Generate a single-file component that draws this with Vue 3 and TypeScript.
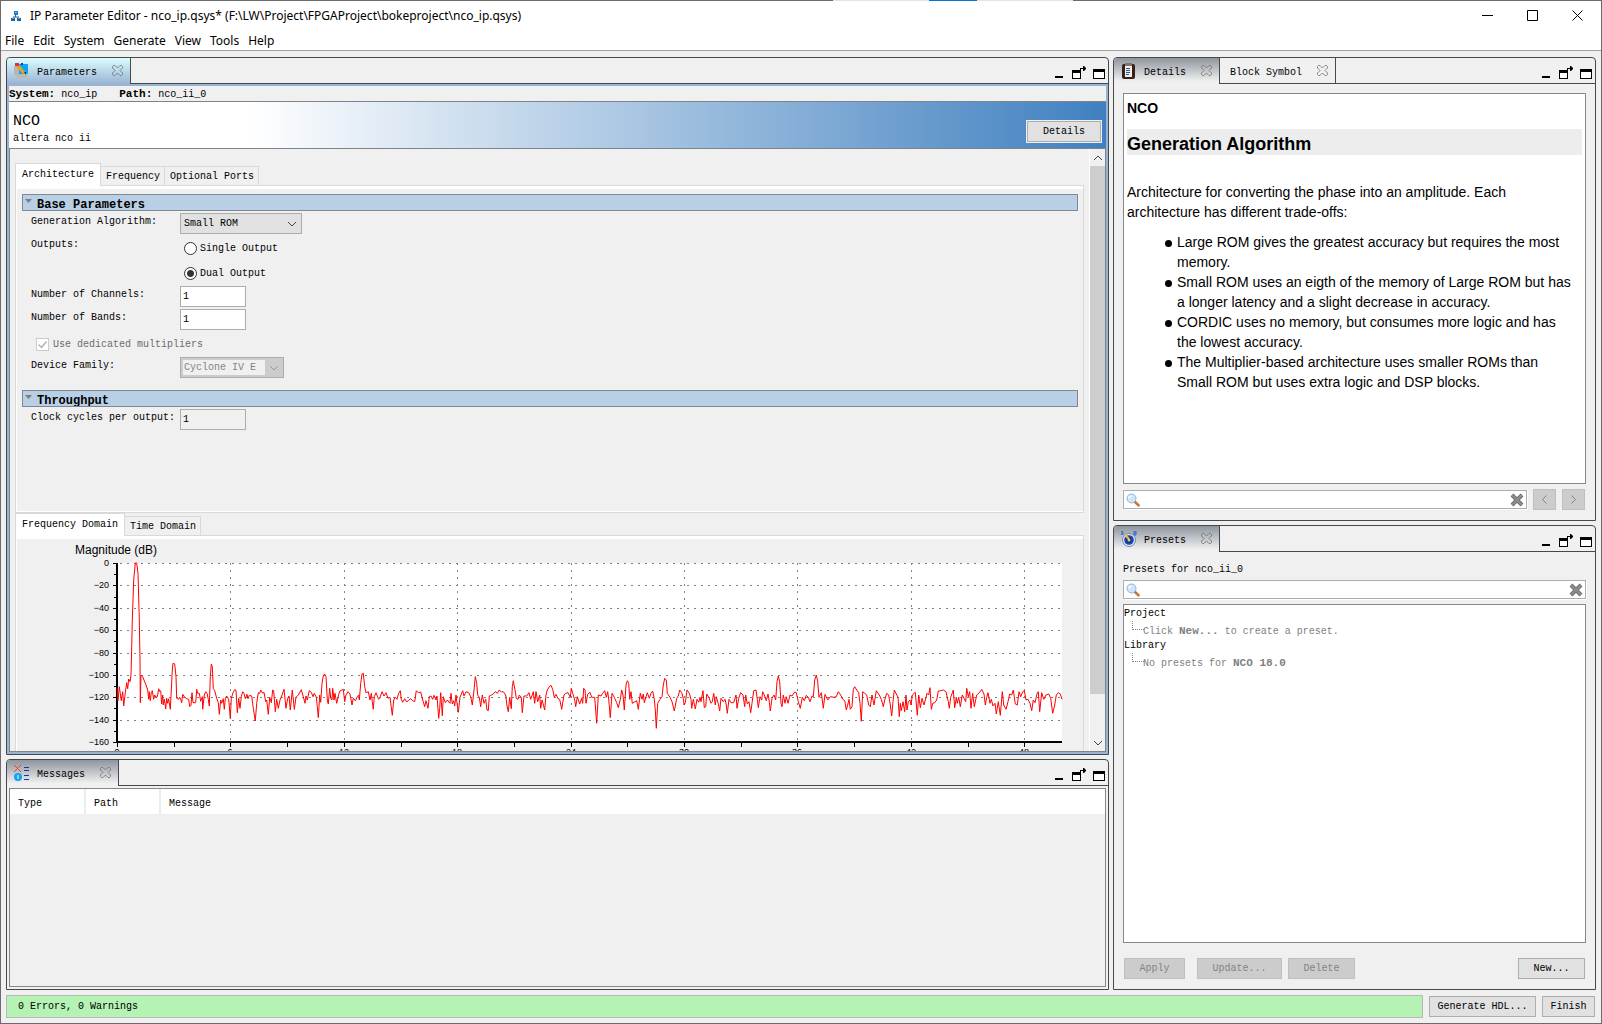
<script setup lang="ts">
import { ref } from 'vue'

const menus = ['File', 'Edit', 'System', 'Generate', 'View', 'Tools', 'Help']
const algorithms = ['Small ROM', 'Large ROM', 'CORDIC', 'Multiplier-based']
const algorithm = ref('Small ROM')
const outputs = ref('dual')
const channels = ref('1')
const bands = ref('1')
const cycles = ref('1')
const family = ref('Cyclone IV E')
const dedicated = ref(true)
const detailSearch = ref('')
const presetSearch = ref('')

const tradeOffs = [
  'Large ROM gives the greatest accuracy but requires the most memory.',
  'Small ROM uses an eigth of the memory of Large ROM but has a longer latency and a slight decrease in accuracy.',
  'CORDIC uses no memory, but consumes more logic and has the lowest accuracy.',
  'The Multiplier-based architecture uses smaller ROMs than Small ROM but uses extra logic and DSP blocks.',
]

// Spectrum samples as "bin,level" pairs; three units make one drawing unit.
const lowBand = `21,143 24,182 28,140 34,182 38,155 41,198 46,158 50,128 53,146 56,117 60,125 63,105 65,20 67,-60 71,-180 76,-231 80,-231 84,-200 88,-60 90,60 91,188 93,105 98,110 108,135 113,150 116,178 118,155 121,182 124,158 127,152 131,178 134,165 138,172 142,170 146,146 149,155 152,152 155,192 158,165 160,195 163,178 165,190 167,207 170,175 173,190 176,176 178,188 181,208 184,150 187,90 189,70 194,72 198,110 200,175 206,178 209,172 212,178 215,188 218,163 224,172 230,176 236,178 239,200 243,196 246,158 249,188 257,188 260,148 263,160 268,160 272,184 277,170 278,208 283,165 287,155 291,160 295,178 298,198 301,110 304,72 307,80 310,145 314,152 320,175 325,188 328,223 332,180 335,190 340,176 343,208 346,176 350,168 356,178 361,235 364,175 369,158 374,149 378,151 382,218 386,175 390,205 394,170 398,155 402,160 406,176 411,163 414,176 418,166 425,168 430,205 436,243 440,190 445,158 449,160 452,150 458,160 462,157 467,185 470,180 475,223 479,172 484,188 488,150 491,152 496,215 500,178 505,205 510,180 516,165 522,148 528,205 533,175 537,168 541,210 547,150 553,208 558,172 565,165 574,149 580,170 585,190 588,168 592,180 598,152 604,157 609,170 613,160 619,172 622,200 625,233 629,165 632,187 636,130 640,108 644,102 648,110 652,180 655,192 659,145 662,175 666,180 668,145 672,180 675,160 680,190 686,163 690,153 700,148 704,185 708,165 714,155 720,162 726,195 730,175 736,182 742,170 746,165 748,180 752,130 756,102 760,100 764,140 768,158 775,155 780,180 784,160 787,185 790,208 793,170 798,158 803,172 806,178 811,170 816,155 822,168 828,158 834,175 840,172 847,226 851,180 856,172 861,178 866,160 871,152 874,178 878,187 884,176 890,186 896,180 902,176 908,182 914,185 919,152 925,158 932,156 938,180 944,200 948,182 954,205 958,170 963,168 968,178 972,166 978,180 981,168 986,235 989,205 992,158 997,227 1000,170 1006,188 1012,180 1020,190 1023,160 1027,192 1031,182 1034,198 1038,165 1041,190 1045,217 1050,172 1058,152 1062,168 1068,155 1076,158 1082,170 1087,195 1092,150 1096,110 1100,130 1103,165 1108,172 1112,200 1117,165 1122,190 1127,178 1131,210 1135,212 1138,168 1144,165 1150,162 1156,155 1162,160 1168,150 1174,156 1180,155 1187,165 1191,198 1195,215 1199,172 1204,206 1207,140 1210,122 1215,150 1219,175 1224,178 1228,165 1234,172 1237,218 1242,168 1250,168 1257,158 1262,178 1270,155 1274,190 1278,155 1283,185 1289,165 1292,205 1296,180 1299,190 1304,210 1308,165 1312,150 1318,140 1323,136 1328,148 1333,172 1338,163 1344,176 1349,178 1355,208 1362,165 1367,160 1374,158 1381,172 1384,145 1388,160 1394,180 1397,200 1402,170 1409,192 1415,175 1418,190 1421,145 1425,150`
const highBand = `0,190 5,163 12,157 17,172 26,172 32,250 37,165 45,168 50,160 56,152 61,172 65,155 68,178 73,233 78,160 85,172 92,188 97,203 103,178 107,150 111,165 115,210 120,135 124,122 128,130 131,178 135,155 139,190 147,185 152,182 157,208 163,160 168,178 172,162 175,188 180,170 184,158 190,175 195,160 200,153 205,178 208,210 211,265 215,190 222,178 228,170 232,135 236,115 241,120 244,160 252,172 258,185 265,213 272,175 277,168 281,150 287,158 292,175 294,195 298,188 303,150 310,160 315,178 317,205 322,178 328,207 333,178 338,187 342,172 345,185 348,168 351,152 355,203 359,200 362,162 370,175 375,190 379,185 383,160 388,195 391,170 396,188 401,213 405,175 412,185 417,178 421,195 424,220 429,178 435,188 443,188 450,165 453,205 458,175 464,158 471,165 476,200 479,165 484,192 489,185 494,218 498,190 503,152 510,150 514,178 517,203 522,170 527,180 530,155 535,165 541,182 546,162 550,185 553,213 558,175 564,165 569,180 573,125 577,108 581,125 585,190 588,200 592,165 597,190 601,170 606,190 612,165 618,168 626,156 631,158 637,185 643,205 649,172 655,182 661,166 667,172 672,185 678,168 682,170 686,120 691,105 695,125 699,172 706,158 712,205 717,163 725,180 733,170 744,172 751,170 757,155 764,165 770,178 776,182 781,210 785,195 789,178 793,208 798,200 802,148 806,140 812,150 818,158 822,190 826,244 830,155 836,160 842,165 848,195 853,200 858,165 864,195 871,152 880,165 886,178 892,200 896,180 902,160 908,165 913,195 917,228 921,185 925,150 931,162 936,172 940,230 943,190 946,212 951,185 956,215 960,165 963,210 967,185 972,180 975,195 979,165 988,157 994,226 998,165 1003,203 1008,175 1014,195 1018,180 1023,160 1028,165 1032,143 1036,208 1040,190 1046,188 1052,180 1057,153 1064,152 1072,150 1080,155 1087,185 1090,205 1094,172 1102,150 1106,203 1111,172 1114,190 1118,172 1123,200 1129,165 1134,175 1139,185 1142,145 1147,170 1151,155 1155,205 1160,160 1165,200 1172,165 1180,158 1187,148 1194,162 1198,195 1202,172 1206,158 1212,190 1216,178 1221,198 1227,190 1231,222 1237,185 1243,226 1249,155 1253,195 1260,208 1266,185 1271,162 1277,165 1282,150 1288,192 1294,195 1299,155 1304,170 1310,155 1315,152 1320,180 1326,178 1332,190 1337,212 1342,180 1347,188 1354,158 1357,155 1361,215 1367,158 1373,178 1380,165 1388,162 1394,175 1400,220 1406,195 1411,165 1417,158 1423,162 1428,178`

const AXIS_X = 101
const AXIS_TOP = 24
const AXIS_BOTTOM = 203
const PLOT_RIGHT = 1046

function toPoints(band: string, shift: number): string {
  return band
    .split(' ')
    .map((pair) => {
      const [x, y] = pair.split(',').map(Number)
      return `${((x + shift - 21) / 3 + AXIS_X).toFixed(1)},${(y / 3 + 101).toFixed(1)}`
    })
    .join(' ')
}
const spectrum = toPoints(lowBand, 0) + ' ' + toPoints(highBand, 1428)

const step = (AXIS_BOTTOM - AXIS_TOP) / 16
const yTicks = Array.from({ length: 17 }, (_, i) => ({
  y: Math.round(AXIS_TOP + i * step),
  major: i % 2 === 0,
  label: i === 0 ? '0' : `−${i * 10}`,
}))
const xTicks = Array.from({ length: 17 }, (_, i) => ({
  x: Math.round(AXIS_X + i * 56.7),
  major: i % 2 === 0,
  label: String(i * 3),
}))
</script>

<template>
  <div class="window">
    <svg class="defs" aria-hidden="true">
      <symbol id="i-close" viewBox="0 0 11 11">
        <path d="M1.5 .5h1.500L5.500 3 8 .5h1.500l1 1V3L8 5.500 10.500 8v1.500l-1 1H8L5.500 8 3 10.500H1.500l-1-1V8L3 5.500.5 3V1.500z" fill="none" stroke="#6e6e6e" stroke-width=".8" />
      </symbol>
      <symbol id="i-min" viewBox="0 0 14 14"><path d="M3 10h8v2H3z" /></symbol>
      <symbol id="i-float" viewBox="0 0 14 14">
        <path d="M0 4h9v9H0z" />
        <path d="M1 7h7v5H1z" fill="#fff" />
        <path d="M8 5V2h3V0h1l2 2v1l-2 2h-1V3H9v2z" />
      </symbol>
      <symbol id="i-max" viewBox="0 0 14 14">
        <path d="M1 3h12v10H1z" /><path d="M2 6h10v6H2z" fill="#fff" />
      </symbol>
      <symbol id="i-search" viewBox="0 0 14 14">
        <path d="M8.500 8.500l4 3.800" stroke="#c07a3c" stroke-width="2.600" stroke-linecap="round" />
        <circle cx="5.500" cy="5.500" r="4.500" fill="#cfe6fa" stroke="#8fb3dc" />
        <path d="M3 5.500a2.500 2.500 0 0 1 2.500-2.500" fill="none" stroke="#fff" stroke-width="1.400" />
      </symbol>
      <symbol id="i-clear" viewBox="0 0 14 14">
        <path d="M2 2l10 10M12 2L2 12" stroke="#6f6f6f" stroke-width="4" />
        <path d="M2 2l10 10M12 2L2 12" stroke="#8e8e8e" stroke-width="2" />
      </symbol>
      <symbol id="i-down" viewBox="0 0 10 6"><path d="M1 1l4 4 4-4" fill="none" stroke="currentColor" /></symbol>
    </svg>

    <div class="behind"><i class="pale"></i><i class="blue"></i><i class="pale"></i></div>

    <header class="titlebar">
      <svg class="app-icon" viewBox="0 0 10 12">
        <path d="M3 1h4v4H3z" fill="#1e7ad0" /><path d="M4 2h2v1H4z" fill="#6db4f0" />
        <path d="M4.500 5v2M2 7.500V7h6v.5" stroke="#555" fill="none" />
        <path d="M0 8h4v3H0zM6 8h4v3H6z" fill="#0c64b8" /><path d="M1 8h2v1H1zM7 8h2v1H7z" fill="#3aa0f0" />
      </svg>
      <h1>IP Parameter Editor - nco_ip.qsys* (F:\LW\Project\FPGAProject\bokeproject\nco_ip.qsys)</h1>
      <div class="sysbuttons">
        <button aria-label="Minimize window"><svg viewBox="0 0 11 11"><path d="M0 5h11v1H0z" /></svg></button>
        <button aria-label="Maximize window"><svg viewBox="0 0 11 11"><path d="M.5.5h10v10H.5z" fill="none" stroke="#000" /></svg></button>
        <button aria-label="Close window"><svg viewBox="0 0 11 11"><path d="M.5.5l10 10M10.500.5l-10 10" fill="none" stroke="#000" /></svg></button>
      </div>
    </header>

    <nav class="menubar"><button v-for="m in menus" :key="m">{{ m }}</button></nav>

    <main class="workspace">
      <div class="left">
        <section class="panel active parameters">
          <div class="panel-head">
            <div class="tab on">
              <svg class="tab-icon" viewBox="0 0 16 16">
                <path d="M0 3h9v9H0z" fill="#b9b4b0" /><path d="M5 1h9v10H5z" fill="#0aa6f5" />
                <path d="M3 2l8 9" stroke="#f0a020" stroke-width="3" /><path d="M1 0h4v3H1z" fill="#ee2a2a" />
                <path d="M10 9l2 3 0-3z" fill="#06325c" /><path d="M7 0h2v2H7z" fill="#1238a8" /><path d="M2 12h12v3H2z" fill="#bdb9b6" />
              </svg>
              <span>Parameters</span>
              <button class="x" aria-label="Close Parameters"><svg><use href="#i-close" /></svg></button>
            </div>
            <div class="tools">
              <button aria-label="Minimize"><svg><use href="#i-min" /></svg></button>
              <button aria-label="Float"><svg><use href="#i-float" /></svg></button>
              <button aria-label="Maximize"><svg><use href="#i-max" /></svg></button>
            </div>
          </div>
          <div class="bevel">
            <p class="crumb"><span><b>System:</b> nco_ip</span><span><b>Path:</b> nco_ii_0</span></p>
            <div class="banner">
              <div><h2>NCO</h2><p>altera nco ii</p></div>
              <button class="btn ringed">Details</button>
            </div>
            <div class="scroller">
              <div class="content">
                <div class="tabs">
                  <button class="on">Architecture</button><button>Frequency</button><button>Optional Ports</button>
                </div>
                <div class="pane arch">
                  <h3><svg viewBox="0 0 7 4"><path d="M0 0h7L3.500 4z" /></svg>Base Parameters</h3>
                  <div class="row">
                    <label for="alg">Generation Algorithm:</label>
                    <div class="combo wide">
                      <select id="alg" v-model="algorithm"><option v-for="a in algorithms" :key="a">{{ a }}</option></select>
                      <svg><use href="#i-down" /></svg>
                    </div>
                  </div>
                  <div class="row" role="radiogroup" aria-labelledby="outs">
                    <span id="outs" class="label">Outputs:</span>
                    <div class="radios">
                      <label><input v-model="outputs" type="radio" name="outputs" value="single" />Single Output</label>
                      <label><input v-model="outputs" type="radio" name="outputs" value="dual" />Dual Output</label>
                    </div>
                  </div>
                  <div class="row"><label for="ch">Number of Channels:</label><input id="ch" v-model="channels" class="field" /></div>
                  <div class="row"><label for="bd">Number of Bands:</label><input id="bd" v-model="bands" class="field" /></div>
                  <div class="check">
                    <input id="ded" v-model="dedicated" type="checkbox" disabled />
                    <svg viewBox="0 0 13 13"><path d="M2.500 6.500l3 3 5-6" fill="none" stroke="#b0b0b0" stroke-width="1.400" /></svg>
                    <label for="ded">Use dedicated multipliers</label>
                  </div>
                  <div class="row family">
                    <label for="fam">Device Family:</label>
                    <div class="combo off">
                      <select id="fam" v-model="family" disabled><option>Cyclone IV E</option></select>
                      <svg><use href="#i-down" /></svg>
                    </div>
                  </div>
                  <h3><svg viewBox="0 0 7 4"><path d="M0 0h7L3.500 4z" /></svg>Throughput</h3>
                  <div class="row"><label for="cyc">Clock cycles per output:</label><input id="cyc" v-model="cycles" class="field locked" readonly /></div>
                </div>
                <div class="tabs lower"><button class="on">Frequency Domain</button><button>Time Domain</button></div>
                <div class="pane chart">
                  <svg viewBox="0 0 1066 226" preserveAspectRatio="xMinYMin meet" role="img" aria-label="Magnitude in decibels by frequency">
                    <rect :x="AXIS_X" :y="AXIS_TOP" :width="PLOT_RIGHT - AXIS_X" :height="AXIS_BOTTOM - AXIS_TOP" fill="#fff" />
                    <text x="59" y="15" class="axis-title">Magnitude (dB)</text>
                    <g class="grid">
                      <template v-for="t in yTicks" :key="t.y">
                        <line v-if="t.major && t.y < AXIS_BOTTOM" :x1="AXIS_X + 3" :x2="PLOT_RIGHT" :y1="t.y" :y2="t.y" />
                      </template>
                      <template v-for="t in xTicks" :key="t.x">
                        <line v-if="t.major && t.x > AXIS_X" :x1="t.x" :x2="t.x" :y1="AXIS_TOP" :y2="AXIS_BOTTOM" />
                      </template>
                    </g>
                    <g class="ticks">
                      <template v-for="t in yTicks" :key="t.y">
                        <line :x1="t.major ? AXIS_X - 4 : AXIS_X - 3" :x2="AXIS_X" :y1="t.y" :y2="t.y" />
                        <text v-if="t.major" :x="AXIS_X - 8" :y="t.y + 3" text-anchor="end">{{ t.label }}</text>
                      </template>
                      <template v-for="t in xTicks" :key="t.x">
                        <line :x1="t.x" :x2="t.x" :y1="AXIS_BOTTOM" :y2="AXIS_BOTTOM + 5" />
                        <text v-if="t.major" :x="t.x" :y="AXIS_BOTTOM + 13" text-anchor="middle">{{ t.label }}</text>
                      </template>
                    </g>
                    <path :d="`M${AXIS_X} ${AXIS_TOP}V${AXIS_BOTTOM}H${PLOT_RIGHT}`" fill="none" stroke="#000" stroke-width="2" />
                    <polyline :points="spectrum" fill="none" stroke="#f00" />
                  </svg>
                </div>
              </div>
              <div class="scrollbar">
                <button aria-label="Scroll up"><svg class="flip"><use href="#i-down" /></svg></button>
                <div class="track"><div class="thumb"></div></div>
                <button aria-label="Scroll down"><svg><use href="#i-down" /></svg></button>
              </div>
            </div>
          </div>
        </section>

        <section class="panel messages">
          <div class="panel-head">
            <div class="tab on">
              <svg class="tab-icon" viewBox="0 0 16 16">
                <path d="M0 0l7 7M7 0L0 7" stroke="#e8402c" /><circle cx="4" cy="12" r="4" fill="#12a4f2" />
                <path d="M3.500 10h1v4h-1z" fill="#fff" /><path d="M10 2h5v1h-5zM10 5h5v1h-5zM10 10h5v1h-5zM10 14h5v1h-5z" fill="#0b3f9e" />
              </svg>
              <span>Messages</span>
              <button class="x" aria-label="Close Messages"><svg><use href="#i-close" /></svg></button>
            </div>
            <div class="tools">
              <button aria-label="Minimize"><svg><use href="#i-min" /></svg></button>
              <button aria-label="Float"><svg><use href="#i-float" /></svg></button>
              <button aria-label="Maximize"><svg><use href="#i-max" /></svg></button>
            </div>
          </div>
          <div class="table-box">
            <table>
              <thead><tr><th class="c1">Type</th><th class="c2">Path</th><th>Message</th></tr></thead>
              <tbody></tbody>
            </table>
          </div>
        </section>
      </div>

      <div class="right">
        <section class="panel details">
          <div class="panel-head">
            <div class="tab on">
              <svg class="tab-icon" viewBox="0 0 16 16">
                <rect x="1" y="1" width="13" height="15" rx="2" fill="#3a1f1c" /><path d="M4 0h7v3H4z" fill="#777" />
                <path d="M4 3h7v11H4z" fill="#f6efdc" /><path d="M5 5h4v1H5zM5 7h4v1H5zM5 9h4v1H5zM5 11h3v1H5z" fill="#1f55b5" />
              </svg>
              <span>Details</span>
              <button class="x" aria-label="Close Details"><svg><use href="#i-close" /></svg></button>
            </div>
            <div class="tab second">
              <span>Block Symbol</span>
              <button class="x" aria-label="Close Block Symbol"><svg><use href="#i-close" /></svg></button>
            </div>
            <div class="tools">
              <button aria-label="Minimize"><svg><use href="#i-min" /></svg></button>
              <button aria-label="Float"><svg><use href="#i-float" /></svg></button>
              <button aria-label="Maximize"><svg><use href="#i-max" /></svg></button>
            </div>
          </div>
          <div class="body">
            <article class="doc">
              <h4>NCO</h4>
              <h2>Generation Algorithm</h2>
              <p>Architecture for converting the phase into an amplitude. Each architecture has different trade-offs:</p>
              <ul><li v-for="t in tradeOffs" :key="t">{{ t }}</li></ul>
            </article>
            <div class="find">
              <div class="search">
                <svg><use href="#i-search" /></svg>
                <input v-model="detailSearch" aria-label="Search details" />
                <button aria-label="Clear search"><svg><use href="#i-clear" /></svg></button>
              </div>
              <button class="btn nav" disabled aria-label="Previous"><svg viewBox="0 0 5 9"><path d="M4.500.5l-4 4 4 4" /></svg></button>
              <button class="btn nav last" disabled aria-label="Next"><svg viewBox="0 0 5 9"><path d="M.5.5l4 4-4 4" /></svg></button>
            </div>
          </div>
        </section>

        <section class="panel presets">
          <div class="panel-head">
            <div class="tab on">
              <svg class="tab-icon" viewBox="0 0 16 16">
                <path d="M0 4V1l1-1 1 1v3M0 3h2M13 0v4h2V0zM13 2h2" fill="none" stroke="#3a62c8" />
                <circle cx="8" cy="9" r="6.500" fill="#dfe6f2" stroke="#6f8ac4" /><circle cx="8" cy="9" r="4.800" fill="#1c46b4" />
                <circle cx="8" cy="9" r="2.500" fill="#0b2a80" /><path d="M4 4l4 4" stroke="#f5c531" stroke-width="2" /><circle cx="8" cy="9" r="1.500" fill="#f5d14a" />
              </svg>
              <span>Presets</span>
              <button class="x" aria-label="Close Presets"><svg><use href="#i-close" /></svg></button>
            </div>
            <div class="tools">
              <button aria-label="Minimize"><svg><use href="#i-min" /></svg></button>
              <button aria-label="Float"><svg><use href="#i-float" /></svg></button>
              <button aria-label="Maximize"><svg><use href="#i-max" /></svg></button>
            </div>
          </div>
          <div class="body">
            <label for="ps" class="caption">Presets for nco_ii_0</label>
            <div class="search">
              <svg><use href="#i-search" /></svg>
              <input id="ps" v-model="presetSearch" />
              <button aria-label="Clear search"><svg><use href="#i-clear" /></svg></button>
            </div>
            <ul class="tree">
              <li>Project<p>Click <b>New...</b> to create a preset.</p></li>
              <li>Library<p>No presets for <b>NCO 18.0</b></p></li>
            </ul>
            <div class="actions">
              <button class="btn b1" disabled>Apply</button>
              <button class="btn b2" disabled>Update...</button>
              <button class="btn b3" disabled>Delete</button>
              <button class="btn b3 new">New...</button>
            </div>
          </div>
        </section>
      </div>
    </main>

    <footer class="statusbar">
      <output>0 Errors, 0 Warnings</output>
      <button class="btn gen">Generate HDL...</button>
      <button class="btn fin">Finish</button>
    </footer>
  </div>
</template>

<style>
body { margin: 0; background: #f0f0f0; }
</style>

<style scoped>
* { box-sizing: border-box; }
h1, h2, h3, h4, p, ul { margin: 0; padding: 0; font-weight: 400; }
ul { list-style: none; }
button { margin: 0; padding: 0; border: 0; background: none; color: inherit; font: inherit; }
input, select { margin: 0; font: inherit; color: inherit; border-radius: 0; }
svg { display: block; flex: none; }
.defs { display: none; }

.window {
  position: relative;
  display: flex;
  flex-direction: column;
  height: 100vh;
  border: 1px solid #6b6b6b;
  background: #f0f0f0;
  color: #000;
  font: 10px/14px 'Liberation Mono', monospace;
}
.behind { position: absolute; top: -1px; left: 52%; display: flex; width: 15%; height: 1px; }
.behind i { flex: 2; background: #e4e4e4; }
.behind .blue { flex: 1; background: #0078d7; }

.titlebar { display: flex; align-items: center; height: 29px; padding-left: 10px; background: #fff; font: 12px/16px 'Noto Sans', sans-serif; }
.app-icon { width: 10px; height: 12px; margin-right: 9px; }
.titlebar h1 { flex: 1; font-size: 12px; }
.sysbuttons { display: flex; padding-right: 1px; }
.sysbuttons button { display: grid; place-items: center; width: 45px; height: 28px; }
.sysbuttons svg { width: 11px; height: 11px; }
.menubar { display: flex; gap: 9px; height: 21px; padding-left: 4px; border-bottom: 1px solid #a0a0a0; background: #fff; font: 12px/20px 'Noto Sans', sans-serif; }
.menubar button { padding-top: 1px; }

.workspace { flex: 1; display: flex; gap: 4px; min-height: 0; padding: 6px 5px 0; }
.left, .right { display: flex; flex-direction: column; gap: 4px; min-width: 0; }
.left { flex: 1103; }
.right { flex: 483; }
.panel { display: flex; flex-direction: column; min-height: 0; border: 1px solid #45484c; border-radius: 4px 4px 0 0; overflow: hidden; }
.panel-head { display: flex; height: 26px; border-bottom: 1px solid #45484c; }
.tab { display: flex; align-items: center; height: 25px; padding: 0 7px; border-right: 1px solid #45484c; }
.tab span { padding: 3px 15px 0 7px; }
.tab.on { height: 26px; background: linear-gradient(#8e959d, #f0f0f0 90%); border-radius: 3px 0 0; }
.active .tab.on { background: linear-gradient(#dbfdff, #99b4d1); }
.tab.second span { padding: 4px 15px 0 3px; }
.tab-icon { width: 16px; height: 16px; margin-top: -1px; }
.x { margin-top: -1px; }
.x svg { width: 11px; height: 11px; }
.tools { display: flex; gap: 6px; margin-left: auto; padding: 5px 2px 0 0; }
.tools svg { width: 14px; height: 14px; }

.parameters { flex: 1; }
.messages { flex: 0 0 231px; }
.bevel { flex: 1; display: flex; flex-direction: column; min-height: 0; border: 2px solid #99b4d1; }
.crumb { display: flex; gap: 22px; height: 16px; line-height: 18px; border-bottom: 1px solid #7f848c; }
b { font-size: 11px; line-height: 12px; }
.banner { display: flex; justify-content: space-between; height: 47px; padding: 9px 4px 0 4px; border-bottom: 1px solid #7f848c; background: linear-gradient(90deg, #fff 22%, #4080c0); }
.banner h2 { font-size: 15px; line-height: 21px; }
.btn { height: 21px; border: 1px solid #adadad; background: #e1e1e1; text-align: center; }
.btn:disabled { border-color: #bfbfbf; background: #ccc; color: #838383; }
.ringed { width: 76px; height: 23px; margin-top: 9px; box-shadow: inset 0 0 0 1px #adadad; border-color: #f0f0f0; }

.scroller { flex: 1; display: flex; min-height: 0; border: solid #7f848c; border-width: 0 1px 1px; overflow: hidden; }
.content { flex: 1; min-width: 0; padding: 15px 5px 0 5px; overflow: hidden; }
.tabs { display: flex; align-items: flex-end; height: 21px; }
.tabs.lower { height: 22px; }
.tabs button { height: 19px; padding: 2px 4px 0 5px; border: 1px solid #d9d9d9; border-left-width: 0; border-bottom: 0; }
.tabs .on { height: 23px; padding: 0 6px; margin-bottom: -1px; background: #fff; border-left-width: 1px; z-index: 1; }
.pane { border: 1px solid #d9d9d9; box-shadow: inset 0 3px #fff, inset 1px 0 #fff, inset 0 -1px #fff; }
.arch { height: 328px; padding: 8px 5px 0 6px; }
.arch h3 { display: flex; height: 17px; margin-bottom: 2px; padding: 4px 0 0 2px; border: 1px solid #808890; background: #b8cfe5; font-size: 12px; line-height: 13px; font-weight: 700; overflow: hidden; }
.arch h3 svg { width: 7px; height: 4px; margin-right: 5px; fill: #76808a; }
.row { display: grid; grid-template-columns: 149px auto; justify-content: start; align-items: start; min-height: 23px; padding-left: 9px; }
.row > label, .label { line-height: 18px; }
.family { min-height: 33px; }
.combo { position: relative; width: 104px; height: 21px; }
.combo.wide { width: 122px; }
.combo select { width: 100%; height: 21px; padding: 0 3px; border: 1px solid #adadad; background: #e1e1e1; appearance: none; }
.combo svg { position: absolute; right: 5px; top: 8px; width: 10px; height: 6px; color: #444; pointer-events: none; }
.combo.off select { opacity: 1; background: linear-gradient(#f0f0f0, #f0f0f0) 2px 2px / 82px 15px no-repeat #ccc; color: #838383; }
.combo.off svg { color: #999; }
.radios label { display: flex; align-items: center; height: 25px; padding-left: 4px; }
.radios input { width: 13px; height: 13px; margin-right: 3px; appearance: none; border: 1px solid #333; border-radius: 50%; background: #fff; }
.radios input:checked { background: radial-gradient(#333 3px, #fff 4px); }
.field { width: 66px; height: 21px; padding: 0 2px; border: 1px solid #adadad; background: #fff; outline: 0; }
.locked { background: #f0f0f0; }
.check { position: relative; display: flex; align-items: center; height: 25px; padding-left: 14px; color: #6d6d6d; }
.check input { width: 13px; height: 13px; margin-right: 4px; appearance: none; border: 1px solid #ccc; background: #fff; }
.check svg { position: absolute; left: 14px; width: 13px; height: 13px; }
.chart svg { width: 100%; height: 226px; padding-top: 3px; box-sizing: content-box; }
.axis-title { font: 12px 'Liberation Sans', sans-serif; }
.grid line { stroke: #808080; stroke-dasharray: 2 5; shape-rendering: crispEdges; }
.ticks line { stroke: #000; shape-rendering: crispEdges; }
.ticks text { font: 9px 'Liberation Sans', sans-serif; }

.scrollbar { display: flex; flex-direction: column; width: 16px; border-left: 1px solid #fff; }
.scrollbar button { display: grid; place-items: center; height: 17px; }
.scrollbar svg { width: 10px; height: 6px; color: #444; }
.flip { transform: rotate(180deg); }
.track { flex: 1; }
.thumb { height: 93%; background: #cdcdcd; }

.table-box { flex: 1; margin: 2px; border: 1px solid #828790; }
table { width: 100%; border-collapse: collapse; table-layout: fixed; }
th { height: 25px; padding: 5px 0 0 8px; border-right: 2px solid #ececec; background: #fff; font-weight: 400; text-align: left; }
th:last-child { border-right: 0; }
.c1, .c2 { width: 75px; }

.details { flex: 0 0 464px; }
.presets { flex: 1; }
.body { flex: 1; display: flex; flex-direction: column; min-height: 0; padding: 9px 9px 10px; }
.doc { flex: 1; padding: 2px 3px; border: 1px solid #828790; background: #fff; font: 14px/20px 'Liberation Sans', Arial, sans-serif; overflow: hidden; }
.doc h4 { margin: 3px 0 12px; font-size: 14px; line-height: 18px; font-weight: 700; }
.doc h2 { margin-bottom: 27px; padding-top: 4px; background: #ededed; font-size: 18px; line-height: 22px; font-weight: 700; }
.doc ul { margin-top: 10px; padding: 0 8px 0 50px; }
.doc li { position: relative; }
.doc li::before { content: ''; position: absolute; left: -12px; top: 8px; width: 7px; height: 7px; border-radius: 50%; background: #000; }
.find { display: flex; align-items: center; gap: 6px; margin-top: 5px; }
.find .search { flex: 1; }
.search { display: flex; align-items: center; height: 19px; padding: 0 2px; border: 1px solid #adadad; background: #fff; box-shadow: 1px 1px #fff; }
.search input { flex: 1; min-width: 0; height: 16px; border: 0; outline: 0; background: none; }
.search svg { width: 14px; height: 14px; }
.nav { display: grid; place-items: center; width: 23px; height: 21px; }
.last { margin-right: 1px; }
.nav svg { width: 5px; height: 9px; fill: none; stroke: #838383; }
.caption { height: 19px; padding-top: 2px; }
.tree { flex: 1; margin: 5px 0 15px; padding-top: 2px; border: 1px solid #828790; background: #fff; }
.tree p { position: relative; height: 18px; padding: 4px 0 0 19px; color: #808080; }
.tree p::before { content: ''; position: absolute; left: 8px; top: 0; width: 11px; height: 8px; border: dotted #808080; border-width: 0 0 1px 1px; }
.actions { display: flex; padding: 0 1px; }
.b1 { width: 61px; margin-right: 12px; }
.b2 { width: 85px; margin-right: 6px; }
.b3 { width: 67px; }
.new { margin-left: auto; }

.statusbar { display: flex; align-items: center; gap: 6px; height: 33px; padding: 0 6px 0 5px; }
.statusbar output { flex: 1; height: 23px; padding: 4px 0 0 11px; border: 1px solid #b9b9b9; background: #b4f3b4; }
.gen { width: 107px; }
.fin { width: 53px; }
</style>
